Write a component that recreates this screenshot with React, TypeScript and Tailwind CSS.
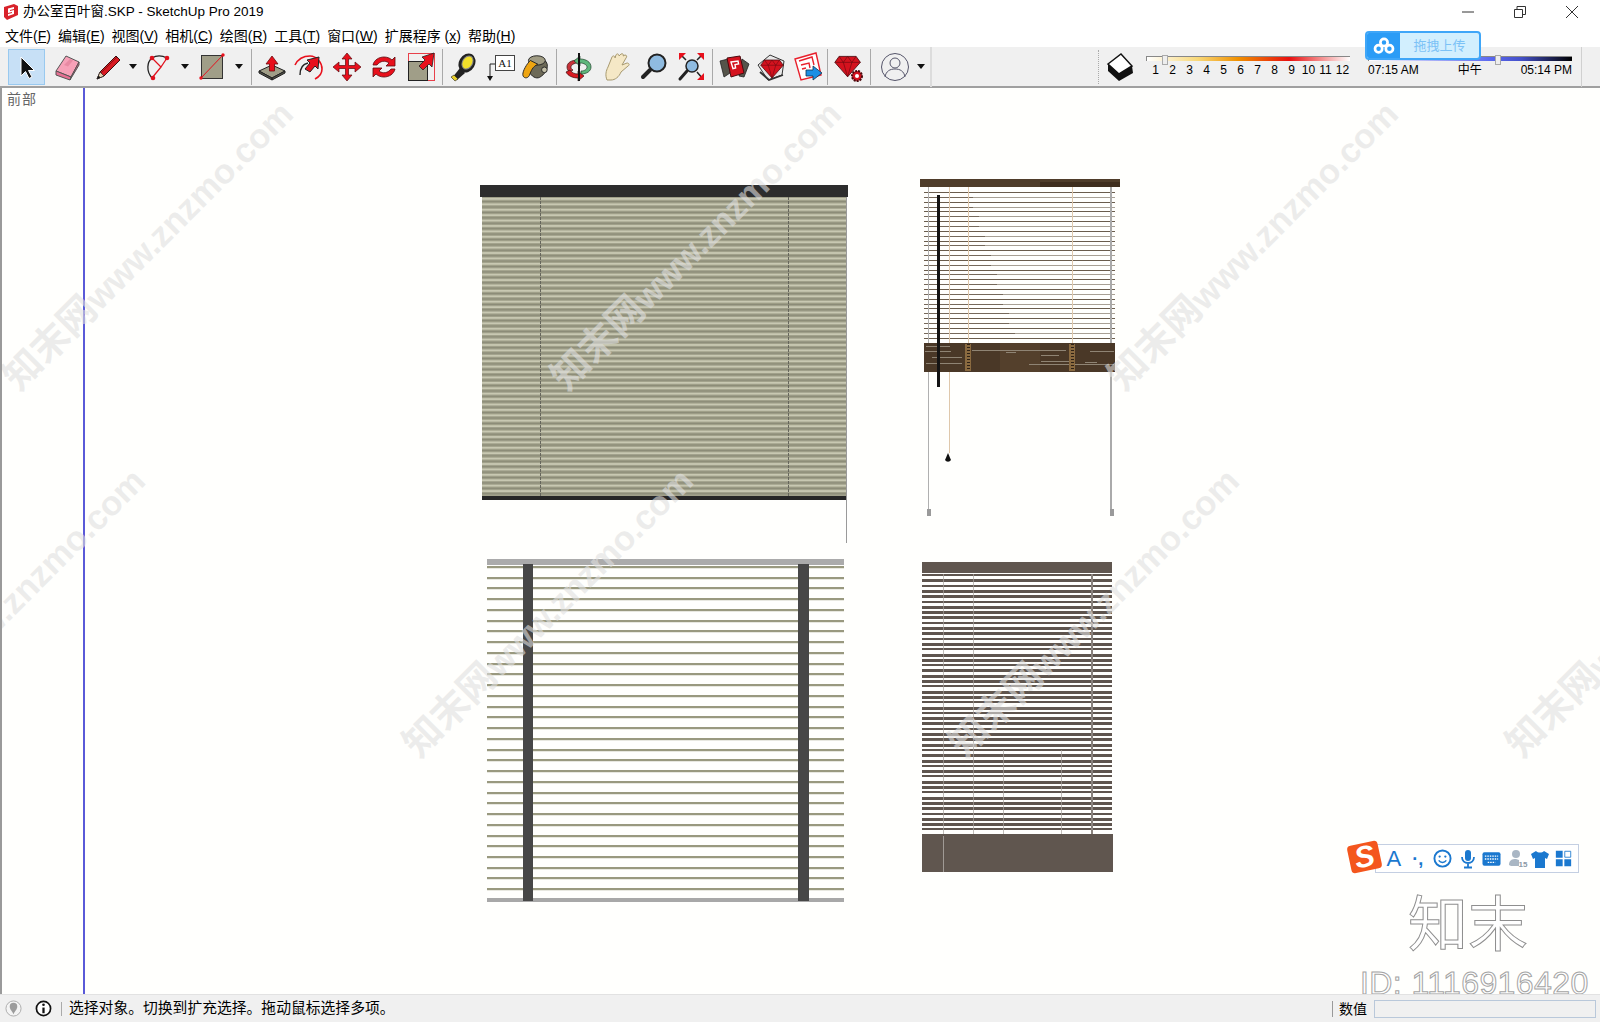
import type { ReactNode } from 'react';

const menus: { label: string; key: string }[] = [
  { label: '文件(', key: 'F' },
  { label: '编辑(', key: 'E' },
  { label: '视图(', key: 'V' },
  { label: '相机(', key: 'C' },
  { label: '绘图(', key: 'R' },
  { label: '工具(', key: 'T' },
  { label: '窗口(', key: 'W' },
  { label: '扩展程序 (', key: 'x' },
  { label: '帮助(', key: 'H' },
];

function Icon({ children }: { children: ReactNode }) {
  return (
    <svg viewBox="0 0 32 32" className="h-8 w-8">
      {children}
    </svg>
  );
}

function Caret() {
  return (
    <svg viewBox="0 0 8 5" className="h-[5px] w-2 shrink-0">
      <path d="M0 0h8L4 5z" fill="#111" />
    </svg>
  );
}

function Sep() {
  return <div className="mx-[1px] h-[36px] w-px shrink-0 bg-[#a9a9a9]" />;
}

const Gem = ({ x = 0, y = 0, s = 1 }: { x?: number; y?: number; s?: number }) => (
  <g transform={`translate(${x} ${y}) scale(${s})`}>
    <path d="M6 4h20l5 7-15 17L1 11z" fill="#d4121e" stroke="#4a0a0e" strokeWidth="1" />
    <path d="M1 11h30M6 4l5 7 5-7 5 7 5-7M11 11l5 17 5-17" fill="none" stroke="#6e0a10" strokeWidth="0.8" />
  </g>
);

const icons = {
  select: (
    <Icon>
      <path d="M10 6v19l4.5-4.5 3.5 7 3-1.500-3.500-6.500h6z" fill="#111" stroke="#fff" strokeWidth="1" />
    </Icon>
  ),
  eraser: (
    <Icon>
      <path d="M5 20 15 5l13 6-8 15z" fill="#f7a1b8" stroke="#555" strokeWidth="1" />
      <path d="M5 20l15 6-1 3-14-5z" fill="#e66f92" stroke="#555" strokeWidth="1" />
      <path d="M20 26l8-15v3l-9 15z" fill="#d95b80" stroke="#555" strokeWidth="1" />
      <path d="M13 14l6-6 3 1.500-5 6z" fill="#e88aa3" />
    </Icon>
  ),
  pencil: (
    <Icon>
      <path d="M5 28 8 21 24 5l4 4-16 16z" fill="#d81a22" stroke="#3a1010" strokeWidth="1" />
      <path d="M5 28 8 21l4 4z" fill="#e9d2b0" stroke="#333" strokeWidth="0.8" />
      <path d="M5 28l1.500-3.500 2 2z" fill="#111" />
      <path d="M9 22 25 6" stroke="#8e1014" strokeWidth="1" />
    </Icon>
  ),
  arc: (
    <Icon>
      <path d="M8 27C2 20 3 11 8 7c5-3 11-2 15 0" fill="none" stroke="#222" strokeWidth="1.300" />
      <path d="M8 7l9 9-9 11M23 7l-6 9" fill="none" stroke="#e0101c" strokeWidth="1.300" />
      <circle cx="8" cy="7" r="2.300" fill="#e0101c" />
      <circle cx="23" cy="7" r="2.300" fill="#e0101c" />
      <circle cx="9" cy="27" r="2.300" fill="#e0101c" />
    </Icon>
  ),
  rect: (
    <Icon>
      <rect x="5.500" y="4.500" width="21" height="23" fill="#a09e88" stroke="#333" strokeWidth="1" />
      <path d="M5 27 27 4" stroke="#e8101c" strokeWidth="1" />
      <circle cx="5" cy="27" r="1.700" fill="#e8101c" />
      <circle cx="27" cy="4" r="1.700" fill="#e8101c" />
    </Icon>
  ),
  push: (
    <Icon>
      <path d="M3 20 16 14l13 6-13 7z" fill="#a09e88" stroke="#222" strokeWidth="1" />
      <path d="M3 20v2l13 7v-2zM29 20v2l-13 7v-2z" fill="#55544a" stroke="#222" strokeWidth="1" />
      <path d="M16 5l-6 8h3.500v7h5v-7H22z" fill="#e8101c" stroke="#6a0a0e" strokeWidth="0.800" />
    </Icon>
  ),
  offset: (
    <Icon>
      <path d="M2 14C5 8 11 5 17 5c7 0 12 7 12 13 0 4-3 8-7 10" fill="none" stroke="#e8101c" strokeWidth="1.600" />
      <path d="M7 24c0-7 3-11 8-12" fill="none" stroke="#222" strokeWidth="1.400" />
      <path d="M26 6l-12 3 3 3-5 6 5 3 5-6 3 3z" fill="#e8101c" stroke="#222" strokeWidth="1" />
    </Icon>
  ),
  move: (
    <Icon>
      <path d="M16 2l5 6h-3.500v6.500H24V11l6 5-6 5v-3.500h-6.500V24H21l-5 6-5-6h3.500v-6.500H8V21l-6-5 6-5v3.500h6.500V8H11z" fill="#e8101c" stroke="#5a0a0e" strokeWidth="0.700" />
    </Icon>
  ),
  rotate: (
    <Icon>
      <path d="M5 14C6 9 11 6 16 6c3 0 6 1 8 3l3-3v9h-9l3-3c-4-3-9-2-12 2z" fill="#e8101c" stroke="#5a0a0e" strokeWidth="0.800" />
      <path d="M27 18c-1 5-6 8-11 8-3 0-6-1-8-3l-3 3v-9h9l-3 3c4 3 9 2 12-2z" fill="#e8101c" stroke="#5a0a0e" strokeWidth="0.800" />
    </Icon>
  ),
  scale: (
    <Icon>
      <rect x="3.500" y="2.500" width="26" height="27" fill="none" stroke="#e8404a" strokeWidth="1" />
      <rect x="3.500" y="10.500" width="19" height="19" fill="#a09e88" stroke="#222" strokeWidth="1" />
      <path d="M29 2 17 6l3 3-6 6 4 4 6-6 3 3z" fill="#e8101c" stroke="#222" strokeWidth="0.800" />
    </Icon>
  ),
  tape: (
    <Icon>
      <path d="M5 27 13 17l5 5-8 7z" fill="#222" />
      <path d="M4 26l4 4 3-2-4-4z" fill="#e9d02a" stroke="#222" strokeWidth="0.600" />
      <ellipse cx="20" cy="12" rx="8" ry="10" transform="rotate(30 20 12)" fill="#222" />
      <ellipse cx="20.500" cy="11.500" rx="5" ry="7" transform="rotate(30 20.500 11.500)" fill="#f2e02a" stroke="#888" strokeWidth="1" />
    </Icon>
  ),
  text: (
    <Icon>
      <path d="M5 13v14M5 13h5" stroke="#222" strokeWidth="1" />
      <path d="M2 25h6l-3 5z" fill="#111" />
      <rect x="10.500" y="4.500" width="19" height="15" fill="#fff" stroke="#444" strokeWidth="1" />
      <text x="20" y="16" textAnchor="middle" className="text-[11px] [font-family:'Liberation_Serif',serif]" fill="#111">
        A1
      </text>
    </Icon>
  ),
  paint: (
    <Icon>
      <path d="M11 8c6-4 16-2 18 5 1 6-3 11-8 14-4 2-9-1-11-6z" fill="#6d6a58" stroke="#222" strokeWidth="1" />
      <ellipse cx="18" cy="9" rx="9" ry="5" fill="#a09c84" stroke="#222" strokeWidth="1" />
      <path d="M11 9c-4 4-8 11-8 15 0 4 5 5 7 1 2-5 3-9 9-12z" fill="#eea512" stroke="#222" strokeWidth="1" />
      <circle cx="26" cy="19" r="3" fill="#c4c0a8" stroke="#222" strokeWidth="1" />
    </Icon>
  ),
  orbit: (
    <Icon>
      <path d="M15 9C8 9 4 12 4 16c0 2 1 4 3 5l3-2c-2-1-2-2-2-3 0-2 3-4 7-4z" fill="#c8333a" stroke="#3a1010" strokeWidth="0.700" />
      <path d="M7 19c2 3 5 4 8 4v-3l6 5-6 5v-3c-5 0-10-2-12-6z" fill="#d81a22" stroke="#3a1010" strokeWidth="0.700" />
      <path d="M17 8c6 0 11 3 11 8 0 4-4 7-10 7v-3c4 0 6-2 6-4s-3-4-7-4v3l-6-5 6-5z" fill="#5fb77c" stroke="#1c3f28" strokeWidth="0.700" />
      <path d="M16 2v28" stroke="#111" strokeWidth="2" />
    </Icon>
  ),
  hand: (
    <Icon>
      <path d="M5 29c-2-5-1-9 1-13l4-10c1-2 3-1 3 1l1-3c1-2 3-1 3 1l2-2c2-1 3 1 2 2l2-1c2 0 2 2 1 3l-4 7 5-2c2 0 3 2 1 3l-7 6c-2 5-6 8-10 8z" fill="#f5e8c6" stroke="#a89a70" strokeWidth="1" />
    </Icon>
  ),
  zoom: (
    <Icon>
      <circle cx="19" cy="12" r="8.500" fill="#8fbbe0" stroke="#222" strokeWidth="2" />
      <path d="M12 19 5 26" stroke="#222" strokeWidth="4" strokeLinecap="round" />
    </Icon>
  ),
  extents: (
    <Icon>
      <circle cx="17" cy="15" r="6" fill="#8fbbe0" stroke="#222" strokeWidth="1.500" />
      <path d="M12 20 5 28" stroke="#222" strokeWidth="3" strokeLinecap="round" />
      <path d="M11 9 5 3M22 9l6-6M22 21l6 7" stroke="#222" strokeWidth="1.500" />
      <path d="M4 2h7L4 9zM29 2h-7l7 7zM29 29h-7l7-7z" fill="#e8101c" />
    </Icon>
  ),
  rubyBox: (
    <Icon>
      <path d="M2 10l8-2 2 14-6 4zM24 8l7 5-5 13-5-1z" fill="#55544a" stroke="#222" strokeWidth="0.800" />
      <path d="M9 7l13-2 4 17-13 4z" fill="#d4121e" stroke="#4a0a0e" strokeWidth="1" />
      <path d="M13 11l7-1 .6 3-3.600.600.600 3.400-2.600.600z" fill="none" stroke="#fff" strokeWidth="1.400" />
    </Icon>
  ),
  rubyPack: (
    <Icon>
      <path d="M2 14 14 4l14 6-2 14-14 5z" fill="#e8e8e8" stroke="#333" strokeWidth="1" />
      <path d="M4 21l9 8 14-5" fill="none" stroke="#333" strokeWidth="1.800" />
      <Gem x={4} y={6} s={0.75} />
    </Icon>
  ),
  rubyShare: (
    <Icon>
      <path d="M3 8 24 2l5 22-20 5z" fill="#fff" stroke="#e8202c" strokeWidth="1.400" />
      <path d="M7 10l13-4 2 8M9 14l8-2 1 5M10 18l4-1" fill="none" stroke="#e8202c" strokeWidth="1.400" />
      <path d="M14 19h7v-4l9 7-9 7v-4h-7z" fill="#1c8fe4" stroke="#10324e" strokeWidth="0.800" />
    </Icon>
  ),
  rubySettings: (
    <Icon>
      <Gem x={1} y={2} s={0.85} />
      <circle cx="24" cy="25" r="5" fill="#d4121e" stroke="#4a0a0e" strokeWidth="2" strokeDasharray="2 1" />
      <circle cx="24" cy="25" r="2" fill="#fff" />
    </Icon>
  ),
  user: (
    <Icon>
      <circle cx="16" cy="16" r="13.500" fill="none" stroke="#55556a" strokeWidth="1" />
      <circle cx="16" cy="12" r="5" fill="none" stroke="#55556a" strokeWidth="1" />
      <path d="M6 26c1-6 5-8 10-8s9 2 10 8" fill="none" stroke="#55556a" strokeWidth="1" />
    </Icon>
  ),
};

type ToolItem = { w: string; node: ReactNode; active?: boolean } | 'sep';

const tools: ToolItem[] = [
  { w: 'w-[37px]', node: icons.select, active: true },
  { w: 'w-[44px]', node: icons.eraser },
  { w: 'w-[38px]', node: icons.pencil },
  { w: 'w-[12px]', node: <Caret /> },
  { w: 'w-[42px]', node: icons.arc },
  { w: 'w-[8px]', node: <Caret /> },
  { w: 'w-[46px]', node: icons.rect },
  { w: 'w-[8px]', node: <Caret /> },
  { w: 'w-[7px]', node: null },
  'sep',
  { w: 'w-[38px]', node: icons.push },
  { w: 'w-[36px]', node: icons.offset },
  { w: 'w-[40px]', node: icons.move },
  { w: 'w-[34px]', node: icons.rotate },
  { w: 'w-[40px]', node: icons.scale },
  'sep',
  { w: 'w-[38px]', node: icons.tape },
  { w: 'w-[38px]', node: icons.text },
  { w: 'w-[30px]', node: icons.paint },
  { w: 'w-[5px]', node: null },
  'sep',
  { w: 'w-[42px]', node: icons.orbit },
  { w: 'w-[35px]', node: icons.hand },
  { w: 'w-[37px]', node: icons.zoom },
  { w: 'w-[38px]', node: icons.extents },
  { w: 'w-[1px]', node: null },
  'sep',
  { w: 'w-[40px]', node: icons.rubyBox },
  { w: 'w-[35px]', node: icons.rubyPack },
  { w: 'w-[37px]', node: icons.rubyShare },
  'sep',
  { w: 'w-[40px]', node: icons.rubySettings },
  'sep',
  { w: 'w-[46px]', node: icons.user },
  { w: 'w-[6px]', node: <Caret /> },
  { w: 'w-[6px]', node: null },
];

const range = (n: number) => Array.from({ length: n }, (_, i) => i);

const brownHeights = [2, 3, 2, 3, 3, 2, 3, 3, 3, 2, 3, 3];

// the four blinds are a model on the canvas, so they are one drawing in page coordinates
function Blinds() {
  return (
    <svg viewBox="0 88 1600 906" className="absolute inset-0 h-[906px] w-[1600px]" shapeRendering="crispEdges">
      {/* top-left, closed olive blind */}
      <rect x="482" y="197" width="365" height="299" fill="#a0a08a" />
      <g shapeRendering="auto">
        {range(55).map((i) => (
          <g key={i}>
            <rect x="482" y={198 + i * 5.41} width="365" height="1.800" fill="#c8c8b2" />
            <rect x="482" y={201 + i * 5.41} width="365" height="1.200" fill="#8c8c78" />
          </g>
        ))}
      </g>
      <rect x="480" y="185" width="368" height="12" fill="#2d2d2d" />
      <rect x="482" y="496" width="365" height="4" fill="#262626" />
      <path d="M540 197V496M788 197V496" stroke="#66665c" strokeWidth="1" strokeDasharray="3 1" />
      <rect x="846" y="197" width="1" height="346" fill="#9a9a9a" />

      {/* top-right, wooden blind */}
      <rect x="920" y="179" width="200" height="8" fill="#4f3d2a" />
      <rect x="1040" y="182" width="80" height="5" fill="#3f2e1e" />
      {range(31).map((i) => {
        const y = Math.round(192 + i * 4.85);
        const split = 973 + Math.floor(i / 4) * 6;
        return i % 2 === 0 ? (
          <rect key={i} x="924" y={y} width="191" height="1" fill="#6a5c4c" />
        ) : (
          <g key={i}>
            <rect x="924" y={y} width={split - 924} height="1" fill="#75685a" />
            <rect x={split} y={y} width={1115 - split} height="1" fill="#a8a094" />
          </g>
        );
      })}
      <path d="M928 187V510" stroke="#b0b0b0" strokeWidth="1" />
      <path d="M1111 187V510" stroke="#aaaaaa" strokeWidth="2" />
      <rect x="926.500" y="509" width="4" height="7" fill="#9a9a9a" />
      <rect x="1109.500" y="509" width="4" height="7" fill="#9a9a9a" />
      <path d="M949 187V453M968 187V343M1072 187V343" stroke="#dfc8ac" strokeWidth="1" />
      <rect x="924" y="343" width="191" height="29" fill="#4a3827" />
      <rect x="1000" y="343" width="40" height="29" fill="#54402c" />
      <path d="M926 346h24M925 351h26M932 357h30M926 363h36M972 350h94M1006 352h10M1041 355h18M1041 361h30M1029 364h50M1078 364h36M1090 351h24M1085 362h12" stroke="#8f8474" strokeWidth="1" />
      <rect x="965" y="344" width="6" height="27" fill="#8a6a40" />
      <rect x="1069" y="344" width="6" height="27" fill="#8a6a40" />
      <path d="M968 344v27M1072 344v27" stroke="#2e2116" strokeWidth="3" strokeDasharray="1 2" />
      <rect x="937" y="195" width="3" height="192" fill="#141414" />
      <path d="M948 453l-3 7a3.500 3.500 0 0 0 6 0z" fill="#111" shapeRendering="auto" />

      {/* bottom-left, open olive blind */}
      <rect x="487" y="559" width="357" height="6" fill="#ababab" />
      {range(31).map((i) => {
        const y = Math.round(566 + i * 10.74);
        return (
          <g key={i}>
            <rect x="487" y={y} width="357" height="2" fill="#99997f" />
            <rect x="487" y={y + 2} width="357" height="1" fill="#e8e8e0" />
          </g>
        );
      })}
      <rect x="487" y="898" width="357" height="4" fill="#a8a8a8" />
      <rect x="523" y="564" width="10" height="337" fill="#474747" />
      <rect x="798" y="564" width="11" height="337" fill="#474747" />

      {/* bottom-right, brown blind */}
      {range(49).map((i) => (
        <rect key={i} x="922" y={Math.round(574 + i * 5.3)} width="190" height={brownHeights[i % 12]} fill="#5f554e" />
      ))}
      <path d="M943 574V872M973 574V834M1003 750V834M1061 750V834" stroke="#a8a29d" strokeWidth="1" strokeOpacity="0.700" />
      <path d="M1092 574V872" stroke="#8a837e" strokeWidth="2" />
      <rect x="922" y="562" width="190" height="11" fill="#60564f" />
      <rect x="922" y="834" width="191" height="38" fill="#60564f" />
      <path d="M943 836V872" stroke="#a09a95" strokeWidth="1" />
    </svg>
  );
}

const marks = [
  'left-[146px] top-[157px]',
  'left-[694px] top-[157px]',
  'left-[1251px] top-[157px]',
  'left-[-2px] top-[524px]',
  'left-[546px] top-[524px]',
  'left-[1092px] top-[524px]',
  'left-[1649px] top-[524px]',
];

export default function App() {
  return (
    <div className="relative flex h-[1022px] w-[1600px] flex-col overflow-hidden bg-white text-black [font-family:'Liberation_Sans','Noto_Sans_CJK_SC',sans-serif]">
      {/* title bar */}
      <div className="flex h-[24px] shrink-0 items-center bg-white">
        <svg viewBox="0 0 16 16" className="ml-[3px] h-4 w-4">
          <path d="M1 3l10-3 4 2v9L4 16l-3-3z" fill="#d8222a" />
          <path d="M5 4.500l6-1.500v2L7 6v1l4-1v4l-6 2v-2l4-1V8L5 9z" fill="#fff" />
        </svg>
        <span className="ml-[4px] text-[13.500px] leading-none">办公室百叶窗.SKP - SketchUp Pro 2019</span>
        <div className="ml-auto flex items-center">
          <svg viewBox="0 0 12 12" className="mr-[40px] h-3 w-3">
            <path d="M0 6h12" stroke="#333" strokeWidth="1" />
          </svg>
          <svg viewBox="0 0 12 12" className="mr-[40px] h-3 w-3">
            <path d="M.5 3.500h8v8h-8zM3 3.500V.5h8.500v8H8.500" fill="none" stroke="#333" strokeWidth="1" />
          </svg>
          <svg viewBox="0 0 12 12" className="mr-[22px] h-3 w-3">
            <path d="M0 0l12 12M12 0 0 12" stroke="#333" strokeWidth="1" />
          </svg>
        </div>
      </div>

      {/* menu bar */}
      <div className="flex h-[23px] shrink-0 items-center gap-[7px] bg-white pl-[5px] text-[14px] leading-none">
        {menus.map((m) => (
          <span key={m.key}>
            {m.label}
            <u>{m.key}</u>)
          </span>
        ))}
      </div>

      {/* toolbar */}
      <div className="relative flex h-[41px] shrink-0 items-center border-b-2 border-[#a0a0a0] bg-[#f0f0f0] pl-[8px]">
        {tools.map((t, i) =>
          t === 'sep' ? (
            <Sep key={i} />
          ) : (
            <div
              key={i}
              className={`flex h-[36px] shrink-0 items-center justify-center ${t.w} ${
                t.active ? 'border border-[#99c9ef] bg-[#c7e0f6]' : ''
              }`}
            >
              {t.node}
            </div>
          ),
        )}
        <div className="h-[40px] w-[2px] shrink-0 bg-[#dcdcdc]" />

        {/* shadow settings */}
        <div className="absolute left-[1098px] top-[3px] flex h-[34px] items-center border-l border-dotted border-[#aaa] pl-[4px]">
          <svg viewBox="0 0 32 32" className="h-8 w-8">
            <path d="M5 13 18 3l11 12-13 8z" fill="#fff" stroke="#111" strokeWidth="1.500" />
            <path d="M5 13l11 10 13-8 1 7-14 8-11-10z" fill="#111" />
          </svg>
        </div>
        <div className="absolute left-[1146px] top-[9px] w-[204px]">
          <div className="h-[5px] border-t border-l border-[#888] [background-image:linear-gradient(to_right,#fff,#f8d878_25%,#f09000_45%,#e81010_70%,#fff)]" />
          <div className="absolute left-[16px] top-[-1px] h-[10px] w-[6px] border border-[#aaa] bg-[#eee]" />
          <div className="mt-[2px] flex w-[212px] pl-[1px] text-[12px] leading-[14px]">
            {range(12).map((i) => (
              <span key={i} className="w-[17px] text-center">
                {i + 1}
              </span>
            ))}
          </div>
        </div>
        <div className="absolute left-[1368px] top-[9px] w-[204px]">
          <div className="h-[5px] border-t border-l border-[#888] [background-image:linear-gradient(to_right,#fff,#5a68f0_60%,#4450c8_75%,#000)]" />
          <div className="absolute left-[127px] top-[-1px] h-[10px] w-[6px] border border-[#aaa] bg-[#eee]" />
          <div className="mt-[2px] flex justify-between text-[12px] leading-[14px]">
            <span>07:15 AM</span>
            <span>中午</span>
            <span>05:14 PM</span>
          </div>
        </div>
        <div className="absolute left-[1581px] top-0 h-[40px] w-px bg-[#d0d0d0]" />
      </div>

      {/* drawing area */}
      <div className="relative flex-1 overflow-hidden border-l-2 border-[#9a9a9a] bg-[#fffffd]">
        <div className="absolute left-[81px] top-0 h-full w-[2px] bg-[#5a5ad8]" />
        <span className="absolute left-[5px] top-[2px] text-[14px] leading-[18px] tracking-[1px] text-[#666]">前部</span>
        <div className="absolute left-[-2px] top-0">
          <Blinds />
        </div>
        {marks.map((m) => (
          <div key={m} className={`absolute h-0 w-0 ${m}`}>
            <span className="absolute left-0 top-0 -translate-x-1/2 -translate-y-1/2 -rotate-45 whitespace-nowrap text-[34.500px] font-bold leading-none text-[#e0e0e0]/60">
              <span className="text-[38px]">知末网</span>www.znzmo.com
            </span>
          </div>
        ))}

        {/* input method bar */}
        <div className="absolute left-[1373px] top-[756px] flex h-[29px] w-[204px] items-center border border-[#c4cfe2] bg-white pl-[4px] text-[#1b78cf]">
          <div className="flex w-[28px] justify-center text-[22px] leading-none">A</div>
          <div className="flex w-[20px] justify-center text-[18px] font-bold leading-none">·,</div>
          <div className="flex w-[30px] justify-center">
            <svg viewBox="0 0 20 20" className="h-[19px] w-[19px]">
              <circle cx="10" cy="10" r="8.500" fill="none" stroke="currentColor" strokeWidth="2" />
              <circle cx="7" cy="8" r="1.200" fill="currentColor" />
              <circle cx="13" cy="8" r="1.200" fill="currentColor" />
              <path d="M6 12c2 3 6 3 8 0" fill="none" stroke="currentColor" strokeWidth="1.500" />
            </svg>
          </div>
          <div className="flex w-[20px] justify-center">
            <svg viewBox="0 0 20 20" className="h-5 w-5">
              <rect x="7" y="1" width="6" height="11" rx="3" fill="currentColor" />
              <path d="M4 8c0 8 12 8 12 0M10 14v4M6 18.500h8" fill="none" stroke="currentColor" strokeWidth="1.800" />
            </svg>
          </div>
          <div className="flex w-[28px] justify-center">
            <svg viewBox="0 0 20 16" className="h-[16px] w-[19px]">
              <rect x="0.500" y="1" width="19" height="14" rx="2" fill="currentColor" />
              <path d="M3 5h14M3 8h14M6 11.500h8" stroke="#fff" strokeWidth="1.400" strokeDasharray="1.600 1" />
            </svg>
          </div>
          <div className="flex w-[26px] justify-center">
            <svg viewBox="0 0 20 20" className="h-5 w-5">
              <circle cx="8" cy="5" r="4" fill="#a9b6c4" />
              <path d="M1 16c0-5 3-6 7-6l3 1v6H3z" fill="#a9b6c4" />
              <text x="10.500" y="18" className="text-[8px] font-bold" fill="#8d9aa8">
                15
              </text>
            </svg>
          </div>
          <div className="flex w-[18px] justify-center">
            <svg viewBox="0 0 20 20" className="h-5 w-5 shrink-0">
              <path d="M6 2c2 2 6 2 8 0l5 3-2 5-2-1v10H5V9l-2 1-2-5z" fill="currentColor" />
            </svg>
          </div>
          <div className="flex w-[29px] justify-center">
            <svg viewBox="0 0 20 20" className="h-[17px] w-[17px]">
              <path d="M1 1h8v8H1zM1 11h8v8H1zM11 11h8v8h-8z" fill="currentColor" />
              <path d="M11.500 1.500h7v7h-7z" fill="none" stroke="currentColor" strokeWidth="1" />
            </svg>
          </div>
        </div>
        <div className="absolute left-[1347px] top-[755px] flex h-[28px] w-[31px] -rotate-12 items-center justify-center rounded-[4px] bg-[#f4561d] text-[30px] font-bold italic leading-none text-white">
          S
        </div>

        {/* corner stamp */}
        <div className="absolute left-[1406px] top-[803px] text-[60px] leading-[70px] text-white [-webkit-text-stroke:1px_#8f8f8f]">知末</div>
        <div className="absolute left-[1358px] top-[877px] text-[32px] leading-[36px] tracking-[0.4px] text-white [-webkit-text-stroke:1px_#a4a4a4]">
          ID: 1116916420
        </div>
      </div>

      {/* status bar */}
      <div className="flex h-[28px] shrink-0 items-center border-t border-[#e2e2e2] bg-[#f0f0f0] text-[14px]">
        <svg viewBox="0 0 18 18" className="ml-[5px] h-[17px] w-[17px]">
          <circle cx="9" cy="9" r="8" fill="#f4f4f4" stroke="#aaa" strokeWidth="1" />
          <path d="M9 15c-2-4-4-5-4-8a4 4 0 0 1 8 0c0 3-2 4-4 8z" fill="#9c9c9c" />
        </svg>
        <svg viewBox="0 0 18 18" className="ml-[13px] h-[17px] w-[17px]">
          <circle cx="9" cy="9" r="7.500" fill="#fff" stroke="#111" strokeWidth="1.800" />
          <circle cx="9" cy="5" r="1.400" fill="#111" />
          <path d="M9 8v6" stroke="#111" strokeWidth="2.400" />
        </svg>
        <div className="ml-[9px] h-[14px] w-px bg-[#aaa]" />
        <span className="ml-[7px] text-[14.800px] leading-none">选择对象。切换到扩充选择。拖动鼠标选择多项。</span>
        <div className="ml-auto h-[16px] w-px bg-[#999]" />
        <span className="ml-[6px] leading-none">数值</span>
        <div className="ml-[7px] mr-[4px] h-[18px] w-[222px] border border-[#b9c8da] bg-[#f0f0f0]" />
      </div>

      {/* upload tray floating over the toolbar */}
      <div className="absolute left-[1365px] top-[31px] flex h-[29px] w-[116px] overflow-hidden rounded-[4px] border-2 border-[#3fa6f8] bg-[#d2effe]">
        <div className="flex w-[33px] items-center justify-center bg-[#2b9cf6]">
          <svg viewBox="0 0 24 20" className="h-[18px] w-[22px]">
            <circle cx="12" cy="6" r="4" fill="none" stroke="#fff" strokeWidth="3" />
            <circle cx="6" cy="13" r="4" fill="none" stroke="#fff" strokeWidth="3" />
            <circle cx="18" cy="13" r="4" fill="none" stroke="#fff" strokeWidth="3" />
          </svg>
        </div>
        <span className="flex-1 self-center text-center text-[13px] leading-none text-[#7cc2f6]">拖拽上传</span>
      </div>
    </div>
  );
}
